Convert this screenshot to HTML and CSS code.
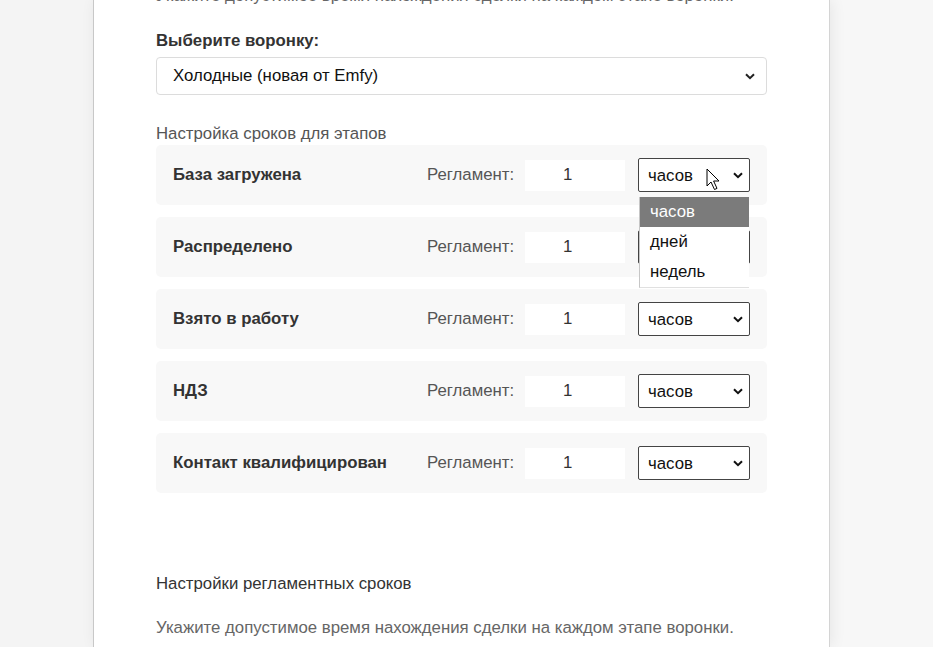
FILE: index.html
```html
<!DOCTYPE html>
<html lang="ru">
<head>
<meta charset="utf-8">
<title>Настройки регламентных сроков</title>
<link rel="stylesheet" href="styles.css">
</head>
<body>
<div class="page">
  <div class="gutter"></div>
  <main class="panel">
    <p class="intro">Укажите допустимое время нахождения сделки на каждом этапе воронки.</p>
    <div class="label">Выберите воронку:</div>
    <div class="funnel-select">
      <span>Холодные (новая от Emfy)</span>
      <svg class="chev" width="10" height="7" viewBox="0 0 10 7"><path d="M1 1.2 L5 5.2 L9 1.2" fill="none" stroke="#222" stroke-width="2"/></svg>
    </div>
    <div class="section-title">Настройка сроков для этапов</div>
    <div class="rows">
      <div class="row">
        <div class="name">База загружена</div>
        <div class="reg">Регламент:</div>
        <input class="num" type="text" value="1">
        <div class="unit-wrap">
          <div class="unit"><span>часов</span><svg class="chev" width="10" height="7" viewBox="0 0 10 7"><path d="M1 1.2 L5 5.2 L9 1.2" fill="none" stroke="#111" stroke-width="2"/></svg></div>
          <ul class="menu">
            <li class="active">часов</li>
            <li>дней</li>
            <li>недель</li>
          </ul>
          <svg class="cursor" width="16" height="24" viewBox="0 0 16 24"><path d="M1 1 L1 18 L5 14 L8.5 21.5 L11 20.4 L7.6 13 L13 13 Z" fill="#fff" stroke="#000" stroke-width="1" stroke-linejoin="round"/></svg>
        </div>
      </div>
      <div class="row">
        <div class="name">Распределено</div>
        <div class="reg">Регламент:</div>
        <input class="num" type="text" value="1">
        <div class="unit-wrap">
          <div class="unit"><span>часов</span><svg class="chev" width="10" height="7" viewBox="0 0 10 7"><path d="M1 1.2 L5 5.2 L9 1.2" fill="none" stroke="#111" stroke-width="2"/></svg></div>
        </div>
      </div>
      <div class="row">
        <div class="name">Взято в работу</div>
        <div class="reg">Регламент:</div>
        <input class="num" type="text" value="1">
        <div class="unit-wrap">
          <div class="unit"><span>часов</span><svg class="chev" width="10" height="7" viewBox="0 0 10 7"><path d="M1 1.2 L5 5.2 L9 1.2" fill="none" stroke="#111" stroke-width="2"/></svg></div>
        </div>
      </div>
      <div class="row">
        <div class="name">НДЗ</div>
        <div class="reg">Регламент:</div>
        <input class="num" type="text" value="1">
        <div class="unit-wrap">
          <div class="unit"><span>часов</span><svg class="chev" width="10" height="7" viewBox="0 0 10 7"><path d="M1 1.2 L5 5.2 L9 1.2" fill="none" stroke="#111" stroke-width="2"/></svg></div>
        </div>
      </div>
      <div class="row">
        <div class="name">Контакт квалифицирован</div>
        <div class="reg">Регламент:</div>
        <input class="num" type="text" value="1">
        <div class="unit-wrap">
          <div class="unit"><span>часов</span><svg class="chev" width="10" height="7" viewBox="0 0 10 7"><path d="M1 1.2 L5 5.2 L9 1.2" fill="none" stroke="#111" stroke-width="2"/></svg></div>
        </div>
      </div>
    </div>
    <div class="section-title2">Настройки регламентных сроков</div>
    <p class="outro">Укажите допустимое время нахождения сделки на каждом этапе воронки.</p>
  </main>
  <div class="side"></div>
</div>
</body>
</html>
```
FILE: styles.css
```css
html, body {
  margin: 0;
  padding: 0;
  height: 100%;
  overflow: hidden;
}
body {
  font-family: "Liberation Sans", Arial, sans-serif;
  font-size: 16.8px;
  color: #333;
  background: #f4f4f4;
}
.page {
  display: flex;
  height: 647px;
}
.gutter {
  width: 93px;
  flex: none;
  background: #f4f4f4;
}
.panel {
  width: 611px;
  flex: none;
  background: #fff;
  border-left: 1px solid #c8c8c8;
  border-right: 1px solid #d4d4d4;
  padding: 0 62px;
  box-shadow: 2px 0 14px rgba(0, 0, 0, 0.07);
  position: relative;
  z-index: 1;
}
.side {
  flex: 1;
  background: #f7f7f7;
}
.intro {
  margin: -13px 0 0;
  line-height: 18px;
  color: #666;
}
.label {
  margin-top: 27px;
  font-weight: bold;
  line-height: 18px;
  color: #333;
}
.funnel-select {
  margin-top: 7px;
  height: 36px;
  border: 1px solid #dcdcdc;
  border-radius: 4px;
  display: flex;
  align-items: center;
  justify-content: space-between;
  padding: 0 11px 0 16px;
  color: #111;
}
.section-title {
  margin-top: 30px;
  line-height: 18px;
  color: #555;
}
.rows {
  margin-top: 2px;
  display: flex;
  flex-direction: column;
  gap: 12px;
}
.row {
  height: 60px;
  background: #f8f8f8;
  border-radius: 5px;
  display: flex;
  align-items: center;
  padding: 0 17px;
}
.name {
  width: 254px;
  font-weight: bold;
  color: #333;
}
.reg {
  width: 98px;
  color: #555;
}
.num {
  width: 100px;
  height: 31px;
  box-sizing: border-box;
  border: none;
  background: #fff;
  padding: 0 0 0 38px;
  font-family: inherit;
  font-size: 16.8px;
  color: #333;
  outline: none;
}
.unit-wrap {
  position: relative;
  margin-left: 13px;
}
.unit {
  border: 1px solid #444;
  border-radius: 2px;
  background: #fff;
  display: flex;
  align-items: center;
  justify-content: space-between;
  padding: 0 6px 0 9px;
  box-sizing: border-box;
  width: 112px;
  height: 34px;
  color: #111;
}
.unit span {
  padding-top: 2px;
}
.menu {
  position: absolute;
  top: 39px;
  left: 1px;
  width: 110px;
  margin: 0;
  padding: 0;
  list-style: none;
  background: #fff;
  border-left: 1px solid #c6c6c6;
  border-bottom: 1px solid #e0e0e0;
  box-sizing: border-box;
  z-index: 5;
}
.menu li {
  height: 30px;
  line-height: 30px;
  padding-left: 10px;
  color: #111;
}
.menu li.active {
  background: #7b7b7b;
  color: #fff;
}
.cursor {
  position: absolute;
  left: 68px;
  top: 10px;
  z-index: 6;
}
.section-title2 {
  margin-top: 81px;
  line-height: 19px;
  color: #333;
}
.outro {
  margin: 25px 0 0;
  line-height: 19px;
  color: #666;
}
```
